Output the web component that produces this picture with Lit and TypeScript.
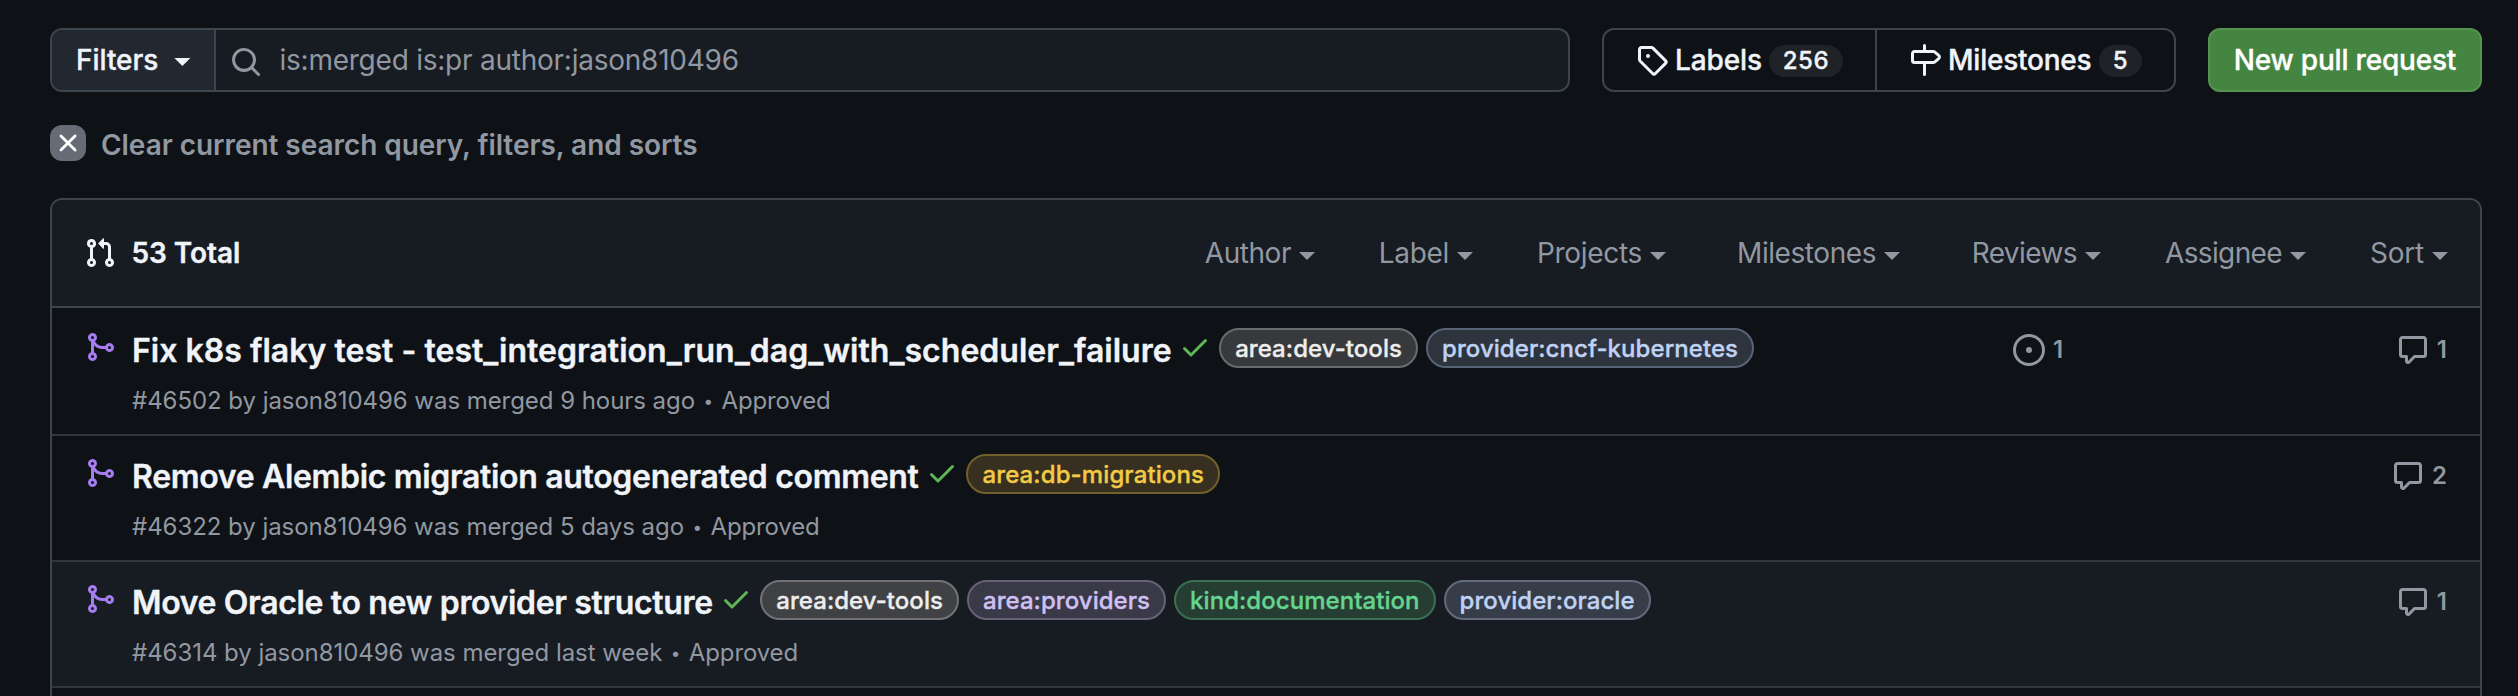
import { LitElement, html, css, svg, nothing } from "lit";
import { customElement, property } from "lit/decorators.js";

const ICONS: Record<string, string> = {
  search: "M10.68 11.74a6 6 0 0 1-7.922-8.982 6 6 0 0 1 8.982 7.922l3.04 3.04a.749.749 0 0 1-.326 1.275.749.749 0 0 1-.734-.215ZM11.5 7a4.499 4.499 0 1 0-8.997 0A4.499 4.499 0 0 0 11.5 7Z",
  x: "M3.72 3.72a.75.75 0 0 1 1.06 0L8 6.94l3.22-3.22a.749.749 0 0 1 1.275.326.749.749 0 0 1-.215.734L9.06 8l3.22 3.22a.749.749 0 0 1-.326 1.275.749.749 0 0 1-.734-.215L8 9.06l-3.22 3.22a.751.751 0 0 1-1.042-.018.751.751 0 0 1-.018-1.042L6.94 8 3.72 4.78a.75.75 0 0 1 0-1.06Z",
  tag: "M1 7.775V2.75C1 1.784 1.784 1 2.75 1h5.025c.464 0 .91.184 1.238.513l6.25 6.25a1.75 1.75 0 0 1 0 2.474l-5.026 5.026a1.75 1.75 0 0 1-2.474 0l-6.25-6.25A1.752 1.752 0 0 1 1 7.775Zm1.5 0c0 .066.026.13.073.177l6.25 6.25a.25.25 0 0 0 .354 0l5.025-5.025a.25.25 0 0 0 0-.354l-6.25-6.25a.25.25 0 0 0-.177-.073H2.75a.25.25 0 0 0-.25.25ZM6 5a1 1 0 1 1 0 2 1 1 0 0 1 0-2Z",
  milestone: "M7.75 0a.75.75 0 0 1 .75.75V3h3.634c.414 0 .814.147 1.13.414l2.07 1.75a1.75 1.75 0 0 1 0 2.672l-2.07 1.75a1.75 1.75 0 0 1-1.13.414H8.5v5.25a.75.75 0 0 1-1.5 0V10H2.75A1.75 1.75 0 0 1 1 8.25v-3.5C1 3.784 1.784 3 2.75 3H7V.75A.75.75 0 0 1 7.75 0Zm4.384 8.5a.25.25 0 0 0 .161-.06l2.07-1.75a.248.248 0 0 0 0-.38l-2.07-1.75a.25.25 0 0 0-.161-.06H2.75a.25.25 0 0 0-.25.25v3.5c0 .138.112.25.25.25h9.384Z",
  pull: "M1.5 3.25a2.25 2.25 0 1 1 3 2.122v5.256a2.251 2.251 0 1 1-1.5 0V5.372A2.25 2.25 0 0 1 1.5 3.25Zm5.677-.177L9.573.677A.25.25 0 0 1 10 .854V2.5h1A2.5 2.5 0 0 1 13.5 5v5.628a2.251 2.251 0 1 1-1.5 0V5a1 1 0 0 0-1-1h-1v1.646a.25.25 0 0 1-.427.177L7.177 3.427a.25.25 0 0 1 0-.354ZM3.75 2.5a.75.75 0 1 0 0 1.5.75.75 0 0 0 0-1.5Zm0 9.5a.75.75 0 1 0 0 1.5.75.75 0 0 0 0-1.5Zm8.25.75a.75.75 0 1 0 1.5 0 .75.75 0 0 0-1.5 0Z",
  merge: "M5.45 5.154A4.25 4.25 0 0 0 9.25 7.5h1.378a2.251 2.251 0 1 1 0 1.5H9.25A5.734 5.734 0 0 1 5 7.123v3.505a2.25 2.25 0 1 1-1.5 0V5.372a2.25 2.25 0 1 1 1.95-.218ZM4.25 13.5a.75.75 0 1 0 0-1.5.75.75 0 0 0 0 1.5Zm8.5-4.5a.75.75 0 1 0 0-1.5.75.75 0 0 0 0 1.5ZM5 3.25a.75.75 0 1 0 0 .005V3.25Z",
  check: "M13.78 4.22a.75.75 0 0 1 0 1.06l-7.25 7.25a.75.75 0 0 1-1.06 0L2.22 9.28a.751.751 0 0 1 .018-1.042.751.751 0 0 1 1.042-.018L6 10.94l6.72-6.72a.75.75 0 0 1 1.06 0Z",
  issue: "M8 9.5a1.5 1.5 0 1 0 0-3 1.5 1.5 0 0 0 0 3ZM8 0a8 8 0 1 1 0 16A8 8 0 0 1 8 0ZM1.5 8a6.5 6.5 0 1 0 13 0 6.5 6.5 0 0 0-13 0Z",
  comment: "M1 2.75C1 1.784 1.784 1 2.75 1h10.5c.966 0 1.75.784 1.75 1.75v7.5A1.75 1.75 0 0 1 13.25 12H9.06l-2.573 2.573A1.458 1.458 0 0 1 4 13.543V12H2.75A1.75 1.75 0 0 1 1 10.25Zm1.75-.25a.25.25 0 0 0-.25.25v7.5c0 .138.112.25.25.25h2a.75.75 0 0 1 .75.75v2.19l2.72-2.72a.749.749 0 0 1 .53-.22h4.5a.25.25 0 0 0 .25-.25v-7.5a.25.25 0 0 0-.25-.25Z",
};

@customElement("ui-icon")
class UiIcon extends LitElement {
  @property() name = "";
  static styles = css`
    :host { display: block; flex: none; width: 32px; height: 32px; }
    svg { display: block; width: 100%; height: 100%; fill: currentColor; }
  `;
  render() {
    return html`<svg viewBox="0 0 16 16" aria-hidden="true">${svg`<path fill-rule="evenodd" d=${ICONS[this.name]}></path>`}</svg>`;
  }
}

interface Pull {
  title: string;
  fit: string;
  meta: string;
  labels: [string, string][];
  reviews?: number;
  comments: number;
  active?: boolean;
}

const PULLS: Pull[] = [
  {
    title: "Fix k8s flaky test - test_integration_run_dag_with_scheduler_failure",
    fit: "loose",
    meta: "#46502 by jason810496 was merged 9 hours ago",
    labels: [["area:dev-tools", "gray"], ["provider:cncf-kubernetes", "blue"]],
    reviews: 1,
    comments: 1,
  },
  {
    title: "Remove Alembic migration autogenerated comment",
    fit: "tight",
    meta: "#46322 by jason810496 was merged 5 days ago",
    labels: [["area:db-migrations", "yellow"]],
    comments: 2,
  },
  {
    title: "Move Oracle to new provider structure",
    fit: "tighter",
    meta: "#46314 by jason810496 was merged last week",
    labels: [["area:dev-tools", "gray"], ["area:providers", "purple"], ["kind:documentation", "green"], ["provider:oracle", "blue"]],
    comments: 1,
    active: true,
  },
];

const MENUS = ["Author", "Label", "Projects", "Milestones", "Reviews", "Assignee", "Sort"];

@customElement("app-root")
class AppRoot extends LitElement {
  static styles = css`
    :host {
      display: block;
      box-sizing: border-box;
      height: 696px;
      overflow: hidden;
      padding: 28px 36px 0 50px;
      background: #0e1116;
      color: #f0f4f9;
      font: 400 28px/42px Inter, "Liberation Sans", sans-serif;
      white-space: nowrap;
    }
    * { box-sizing: border-box; }
    .toolbar { display: flex; gap: 32px; height: 64px; }
    .search { flex: none; width: 1520px; display: flex; border: 2px solid #3d444c; border-radius: 12px; background: #171b22; overflow: hidden; }
    .filters { flex: none; width: 164px; display: flex; align-items: center; padding-left: 24px; background: #222830; border-right: 2px solid #3d444c; font-weight: 500; letter-spacing: -0.04px; }
    .caret { flex: none; width: 16px; height: 8px; background: currentColor; clip-path: polygon(0 0, 100% 0, 50% 100%); }
    .filters .caret { margin: 4px 0 0 16px; }
    .query { display: flex; align-items: center; padding-left: 14px; gap: 17.5px; color: #9198a1; letter-spacing: -0.24px; }
    .query ui-icon { margin-top: 4px; }
    .links { flex: none; width: 574px; display: flex; border: 2px solid #3d444c; border-radius: 12px; font-weight: 500; }
    .link { display: flex; align-items: center; padding-left: 32px; letter-spacing: -0.1px; }
    .link:first-child { width: 273px; border-right: 2px solid #3d444c; }
    .link:last-child { flex: 1; letter-spacing: -0.23px; }
    .link-text { margin-left: 7px; flex: 1; }
    .counter { flex: none; height: 32px; margin: 2px 32px 0 0; padding: 0 14px; border-radius: 16px; background: #1f2327; font-size: 24px; line-height: 32px; letter-spacing: 0.5px; }
    .create { flex: 1; display: flex; align-items: center; justify-content: center; border: 2px solid #559350; border-radius: 12px; background: #448541; color: #fff; font-weight: 500; letter-spacing: -0.2px; }
    .filters, .link-text, .counter, .create, .title, .tag, .total { -webkit-text-stroke: 0.35px currentColor; }
    .clear { display: flex; align-items: center; height: 36px; margin-top: 33px; gap: 15px; color: #9198a1; font-weight: 600; letter-spacing: -0.05px; }
    .clear-box { width: 36px; height: 36px; display: flex; align-items: center; justify-content: center; border-radius: 12px; background: #656c76; color: #fff; }
    .clear-box ui-icon { width: 30px; height: 30px; }
    .clear-text { padding-top: 3px; }
    .list { margin-top: 37px; height: 540px; border: 2px solid #3d444c; border-radius: 12px; overflow: hidden; }
    .head { display: flex; align-items: center; height: 108px; padding: 0 32px; border-bottom: 2px solid #3d444c; background: #171b22; }
    .total { margin-left: 15.5px; font-weight: 600; letter-spacing: -0.05px; }
    .menus { display: flex; margin-left: auto; color: #9198a1; }
    .menu { display: flex; align-items: center; justify-content: flex-end; gap: 8px; }
    .menu .caret { margin-top: 6px; }
    .author { letter-spacing: -0.45px; }
    .label { width: 158px; letter-spacing: -0.3px; }
    .projects { width: 193px; letter-spacing: -0.3px; }
    .milestones { width: 234px; letter-spacing: -0.43px; }
    .reviews { width: 201px; letter-spacing: -0.58px; }
    .assignee { width: 205px; letter-spacing: -0.62px; }
    .sort { width: 142px; letter-spacing: -0.2px; }
    .row { display: flex; height: 126px; padding: 0 32px; border-top: 2px solid #31363c; }
    .head + .row { border-top-color: transparent; }
    .row.active { background: #171b22; }
    .merged { margin-top: 21px; color: #a57df1; }
    .body { margin-left: 16px; flex: 1; }
    .line { display: flex; align-items: center; height: 40px; margin-top: 18px; }
    .title { font-size: 32px; font-weight: 600; line-height: 48px; padding-top: 5px; }
    .loose { letter-spacing: 0.02px; }
    .tight { letter-spacing: -0.33px; }
    .tighter { letter-spacing: -0.35px; }
    .check { margin: -2px 8px 0 7.5px; color: #60b657; }
    .tight + .check { margin-left: 8px; }
    .tag { height: 40px; margin-right: 8px; padding: 0 14px; border: 2px solid; border-radius: 20px; font-size: 24px; line-height: 37px; font-weight: 500; letter-spacing: 0.06px; }
    .gray { background: #37393c; border-color: #6a6b6d; color: #ededed; }
    .blue { background: #2e343e; border-color: #596377; color: #bfd2f4; }
    .yellow { background: #373020; border-color: #72602b; color: #f2ca45; letter-spacing: 0.11px; }
    .purple { background: #3a3947; border-color: #686279; color: #cfc0f4; }
    .green { background: #263d34; border-color: #3a7052; color: #66d48e; }
    .active .tag { letter-spacing: 0.05px; }
    .active .gray { background: #3f4144; border-color: #727376; }
    .active .blue { background: #363c48; border-color: #616b7e; }
    .meta { display: flex; margin-top: 15px; color: #9198a1; font-size: 24px; line-height: 36px; letter-spacing: -0.05px; }
    .dot { width: 26.5px; text-align: center; font-size: 17px; }
    .approved { letter-spacing: -0.14px; }
    .count { display: flex; align-items: center; gap: 8px; height: 32px; margin-top: 24px; color: #9198a1; font-size: 24px; line-height: 32px; font-weight: 600; }
    .reviewers { width: 235px; }
    .comments { width: 200px; justify-content: flex-end; padding-right: 1px; }
  `;

  private row(p: Pull) {
    return html`<article class="row ${p.active ? "active" : ""}">
      <ui-icon class="merged" name="merge"></ui-icon>
      <div class="body">
        <div class="line">
          <span class="title ${p.fit}">${p.title}</span>
          <ui-icon class="check" name="check"></ui-icon>
          ${p.labels.map(([text, tone]) => html`<span class="tag ${tone}">${text}</span>`)}
        </div>
        <div class="meta"><span>${p.meta}</span><span class="dot">•</span><span class="approved">Approved</span></div>
      </div>
      ${p.reviews ? html`<div class="count reviewers"><ui-icon name="issue"></ui-icon>${p.reviews}</div>` : nothing}
      <div class="count comments"><ui-icon name="comment"></ui-icon>${p.comments}</div>
    </article>`;
  }

  render() {
    return html`
      <div class="toolbar">
        <div class="search">
          <div class="filters">Filters<span class="caret"></span></div>
          <div class="query"><ui-icon name="search"></ui-icon><span>is:merged is:pr author:jason810496</span></div>
        </div>
        <nav class="links">
          <div class="link"><ui-icon name="tag"></ui-icon><span class="link-text">Labels</span><span class="counter">256</span></div>
          <div class="link"><ui-icon name="milestone"></ui-icon><span class="link-text">Milestones</span><span class="counter">5</span></div>
        </nav>
        <div class="create">New pull request</div>
      </div>
      <div class="clear"><span class="clear-box"><ui-icon name="x"></ui-icon></span><span class="clear-text">Clear current search query, filters, and sorts</span></div>
      <section class="list">
        <header class="head">
          <ui-icon name="pull"></ui-icon><span class="total">53 Total</span>
          <div class="menus">${MENUS.map((m) => html`<span class="menu ${m.toLowerCase()}">${m}<span class="caret"></span></span>`)}</div>
        </header>
        ${PULLS.map((p) => this.row(p))}
        <article class="row"></article>
      </section>
    `;
  }
}
